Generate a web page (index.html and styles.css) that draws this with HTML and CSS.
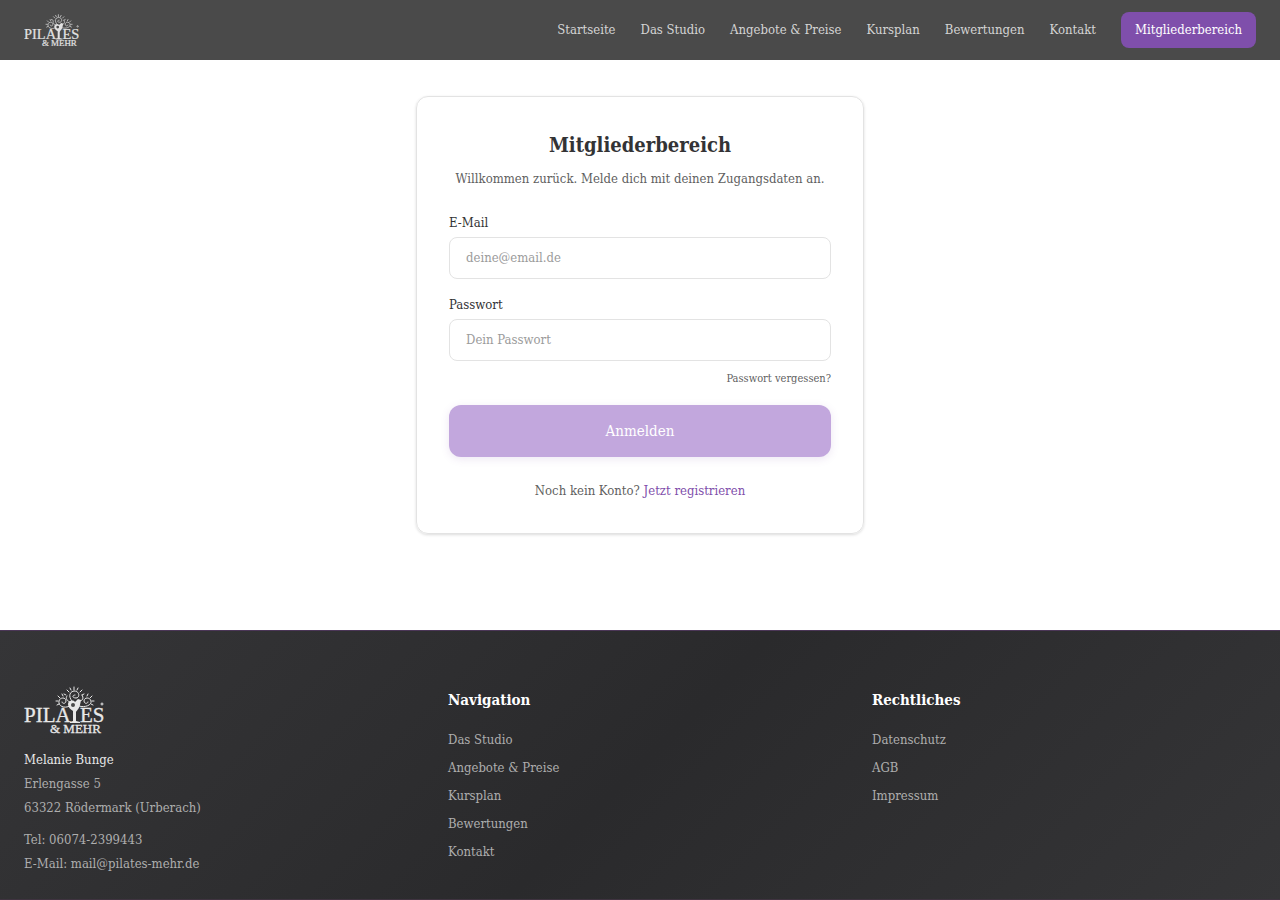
FILE: index.html
```html
<!DOCTYPE html>
<html lang="de">
<head>
  <meta charset="utf-8">
  <meta name="viewport" content="width=device-width, initial-scale=1">
  <title>Mitgliederbereich</title>
  <link rel="stylesheet" href="styles.css">
</head>
<body>
  <!-- Logo, wird in Kopf- und Fußzeile verwendet -->
  <svg class="sprite" aria-hidden="true">
    <symbol id="logo" viewBox="0 0 80 48">
      <g class="logo-text">
        <text x="0" y="36" font-size="21">PILA</text>
        <text x="56" y="36" font-size="21">ES</text>
        <text x="26" y="47" font-size="13">&amp; MEHR</text>
      </g>
      <g fill="none" stroke="currentColor" stroke-width="1" stroke-linecap="round">
        <path d="M46 20C40 23 34 20 35 15C36 11 42 11 42 15C42 18 38 18 38 16"/>
        <path d="M49 16C45 13 44 6 50 5C56 5 56 12 52 12C48 12 48 9 51 9"/>
        <path d="M55 20C61 22 68 19 67 15C66 11 60 11 60 15C60 18 64 18 64 16"/>
        <path d="M46 16C43 15 41 12 43 10M55 15C59 15 60 12 58 9"/>
        <path d="M45 6L43 4M47 4L46 2M50 4V1M53 4L54 2M56 6L58 4M58 9L60 8M42 9L40 8"/>
        <path d="M36 12L34 10M39 10L38 8M34 15L32 15M35 18L33 19M63 10L64 8M66 12L68 10M68 15L70 15M67 18L69 19"/>
      </g>
      <path fill="currentColor" d="M44 18C44 15 49 13 51 16L54 13L57 14L56 19C55 23 53 24 52 26V35L56 36V37H46V36L49 35V25C46 23 44 21 44 18Z"/>
      <circle cx="49" cy="19" r="2" class="logo-hole"/>
      <circle cx="78" cy="18" r="1" fill="none" stroke="currentColor" stroke-width="1"/>
    </symbol>
  </svg>

  <header class="header">
    <a href="#" class="logo-link" aria-label="Startseite"><svg class="logo-small" aria-hidden="true"><use href="#logo"/></svg></a>
    <nav class="nav">
      <a href="#">Startseite</a>
      <a href="#">Das Studio</a>
      <a href="#">Angebote &amp; Preise</a>
      <a href="#">Kursplan</a>
      <a href="#">Bewertungen</a>
      <a href="#">Kontakt</a>
      <a href="#" class="nav-button">Mitgliederbereich</a>
    </nav>
  </header>

  <main class="main">
    <div class="card">
      <h1>Mitgliederbereich</h1>
      <p class="intro">Willkommen zurück. Melde dich mit deinen Zugangsdaten an.</p>

      <!-- Loginformular -->
      <form id="login-form">
        <label for="email">E-Mail</label>
        <input type="email" id="email" name="email" placeholder="deine@email.de" required>
        <label for="password">Passwort</label>
        <input type="password" id="password" name="password" placeholder="Dein Passwort" required>
        <a href="#" class="forgot">Passwort vergessen?</a>
        <button type="submit" class="submit" disabled>Anmelden</button>
      </form>

      <p class="register">Noch kein Konto? <a href="#">Jetzt registrieren</a></p>
    </div>
  </main>

  <footer class="footer">
    <div class="footer-columns">
      <div class="contact">
        <svg class="logo-large" aria-hidden="true"><use href="#logo"/></svg>
        <p class="contact-name">Melanie Bunge</p>
        <p>Erlengasse 5</p>
        <p>63322 Rödermark (Urberach)</p>
        <p class="contact-phone">Tel: <a href="tel:060742399443">06074-2399443</a></p>
        <p>E-Mail: <a href="mailto:mail@pilates-mehr.de">mail@pilates-mehr.de</a></p>
      </div>
      <div>
        <h2>Navigation</h2>
        <ul class="footer-links">
          <li><a href="#">Das Studio</a></li>
          <li><a href="#">Angebote &amp; Preise</a></li>
          <li><a href="#">Kursplan</a></li>
          <li><a href="#">Bewertungen</a></li>
          <li><a href="#">Kontakt</a></li>
        </ul>
      </div>
      <div>
        <h2>Rechtliches</h2>
        <ul class="footer-links">
          <li><a href="#">Datenschutz</a></li>
          <li><a href="#">AGB</a></li>
          <li><a href="#">Impressum</a></li>
        </ul>
      </div>
    </div>
    <div class="footer-bottom"></div>
  </footer>
</body>
</html>
```

FILE: styles.css
```css
* {
  box-sizing: border-box;
}

body {
  margin: 0;
  min-height: 100vh;
  display: flex;
  flex-direction: column;
  background: #fff;
  color: #333335;
  font-family: "DejaVu Serif Condensed", "DejaVu Serif", serif;
  font-size: 13px;
  line-height: 20px;
}

h1, h2, p, ul {
  margin: 0;
}

a {
  color: inherit;
  text-decoration: none;
}

.sprite {
  display: none;
}

/* Kopfzeile */
.header {
  display: flex;
  align-items: center;
  justify-content: space-between;
  height: 60px;
  padding: 0 24px;
  background: #4a4a4a;
  color: #d4d4d4;
}

.logo-link {
  display: flex;
  color: #e2e2e2;
}

.logo-text {
  fill: currentColor;
  stroke: currentColor;
  stroke-width: 0.3;
  font-family: "Liberation Serif", "Times New Roman", serif;
}

.logo-hole {
  fill: #4a4a4a;
}

.logo-small {
  width: 55px;
  height: 33px;
}

.nav {
  display: flex;
  align-items: center;
  gap: 25px;
}

.nav-button {
  padding: 8px 14px;
  border-radius: 8px;
  background: #7f4fab;
  color: #fff;
}

/* Anmeldekarte */
.main {
  padding: 36px 16px 96px;
}

.card {
  max-width: 448px;
  margin: 0 auto;
  padding: 32px;
  border: 1px solid #e3e3e3;
  border-radius: 12px;
  box-shadow: 0 1px 3px rgba(0, 0, 0, 0.14);
  text-align: center;
}

h1 {
  margin-bottom: 8px;
  font-size: 20px;
  line-height: 32px;
}

.intro {
  margin-bottom: 24px;
  color: #5f5f5f;
}

#login-form {
  display: flex;
  flex-direction: column;
  text-align: left;
}

label {
  margin-bottom: 4px;
}

input {
  width: 100%;
  height: 42px;
  margin-bottom: 16px;
  padding: 0 16px 2px;
  border: 1px solid #e3e3e3;
  border-radius: 8px;
  background: #fff;
  color: inherit;
  font: inherit;
}

input::placeholder {
  color: #9b9b9b;
  opacity: 1;
}

#password {
  margin-bottom: 8px;
}

.forgot {
  align-self: flex-end;
  margin-bottom: 16px;
  color: #5f5f5f;
  font-size: 11px;
}

.submit {
  height: 52px;
  border: 0;
  border-radius: 12px;
  background: #c2a7dd;
  box-shadow: 0 2px 8px rgba(127, 79, 171, 0.14);
  color: #fff;
  font: inherit;
  font-size: 15px;
}

.register {
  margin-top: 24px;
  color: #5f5f5f;
}

.register a {
  color: #7f4fab;
}

/* Fusszeile */
.footer {
  flex: 1;
  padding: 55px 24px 0;
  border-top: 1px solid #4b3657;
  background: linear-gradient(135deg, #353537 0%, #2a2a2c 50%, #353537 100%);
  color: #aeaeae;
}

.footer-columns {
  display: grid;
  grid-template-columns: repeat(3, 1fr);
  gap: 40px;
}

.footer-bottom {
  margin: 23px -24px 0;
  border-top: 1px solid #3f3340;
}

.logo-large {
  display: block;
  width: 80px;
  height: 48px;
  margin-bottom: 14px;
  color: #e8e8e8;
}

.contact {
  line-height: 24px;
}

.contact-name {
  color: #e8e8e8;
}

.contact-phone {
  margin-top: 8px;
}

h2 {
  margin-bottom: 16px;
  color: #fff;
  font-size: 15px;
  line-height: 28px;
}

.footer-links {
  display: flex;
  flex-direction: column;
  gap: 8px;
  padding: 0;
  list-style: none;
}
```
